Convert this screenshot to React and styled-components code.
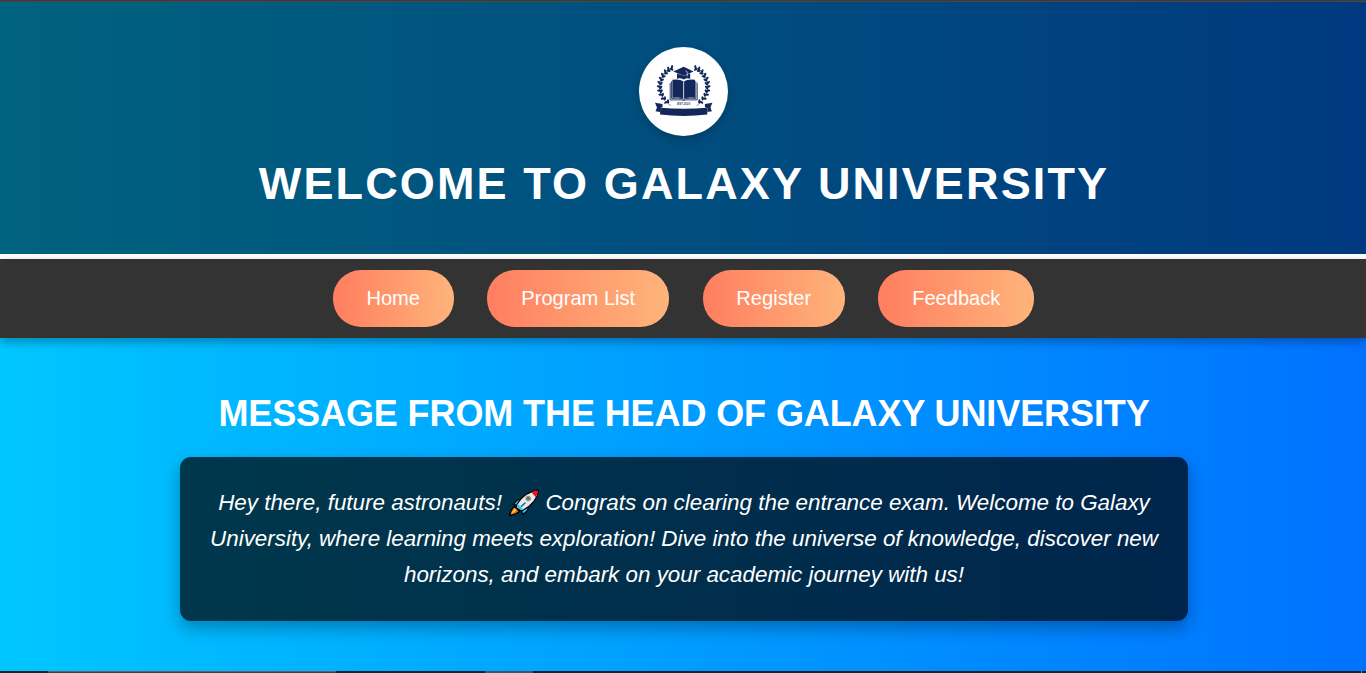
import React from "react";
import styled, { createGlobalStyle } from "styled-components";

const GlobalStyle = createGlobalStyle`
  * { box-sizing: border-box; }
  body {
    margin: 0;
    font-family: "Liberation Sans", Arial, sans-serif;
    color: #fff;
    overflow: hidden;
  }
`;

const Page = styled.div`
  height: 673px;
  display: flex;
  flex-direction: column;
  background: linear-gradient(to right, #00c6ff, #0072ff);
`;

const TopEdge = styled.div`
  flex: none;
  height: 2px;
  background: linear-gradient(#3b3b3b 50%, #474747 50%);
`;

const Header = styled.header`
  flex: none;
  height: 257px;
  padding-top: 45px;
  display: flex;
  flex-direction: column;
  align-items: center;
  background: rgba(0, 0, 0, 0.5);
  background-clip: padding-box;
  border-bottom: 5px solid #fff;
`;

const LogoDisc = styled.div`
  width: 89px;
  height: 89px;
  border-radius: 50%;
  background: #fff;
  box-shadow: 0 4px 11px rgba(0, 0, 0, 0.2);
  svg { display: block; }
`;

const Title = styled.h1`
  margin: 22px 0 0;
  font-size: 45px;
  line-height: 51px;
  letter-spacing: 2.12px;
  padding-left: 2px;
  white-space: nowrap;
`;

const Nav = styled.nav`
  flex: none;
  height: 79px;
  padding-left: 1px;
  display: flex;
  justify-content: center;
  align-items: center;
  gap: 33.5px;
  background: #333;
  box-shadow: 0 4px 9px rgba(0, 0, 0, 0.3);
`;

const NavLink = styled.a`
  width: ${(p) => p.$width}px;
  height: 57px;
  border-radius: 28px;
  line-height: 56px;
  font-size: 20.1px;
  text-align: center;
  color: #fff;
  background: linear-gradient(to right, #ff7e5f, #feb47b);
`;

const Main = styled.main`
  flex: 1;
  padding-left: 2px;
  display: flex;
  flex-direction: column;
  align-items: center;
`;

const Heading = styled.h2`
  margin: 55px 0 0;
  font-size: 36px;
  line-height: 42px;
  letter-spacing: -0.1px;
  white-space: nowrap;
`;

const Message = styled.div`
  width: 1008px;
  height: 164px;
  margin-top: 22px;
  padding-top: 28px;
  border-radius: 11px;
  background: rgba(0, 0, 0, 0.7);
  box-shadow: 0 7px 17px rgba(0, 0, 0, 0.3);
  font-size: 22.4px;
  font-style: italic;
  line-height: 36px;
  text-align: center;
`;

const Line = styled.div`
  height: 36px;
  white-space: nowrap;
`;

const RocketIcon = styled.svg`
  width: 32px;
  height: 28px;
  margin: 0 -1px 0 0;
  vertical-align: -7px;
`;

const BottomEdge = styled.div`
  flex: none;
  height: 2px;
  display: flex;
  background: #14242e;
`;

const EdgePart = styled.div`
  width: ${(p) => p.$width}px;
  background: ${(p) => p.$color};
`;

const leaves = [
  [32, 21, 25], [28.7, 22.8, 5], [25.9, 25.5, -10], [23.5, 29, -22],
  [21.7, 32.8, -32], [20.6, 36.7, -42], [20.4, 40.7, -52],
  [21, 44.7, -62], [22.5, 48.5, -75], [24.9, 52.2, -88], [28.3, 55.6, -100],
];

const Branch = () => (
  <g>
    <path d="M32.5 21C16.5 27 16.5 50 32 58.6" fill="none" stroke="#12275a" strokeWidth=".45" />
    {leaves.map(([x, y, a]) => (
      <g key={y} transform={`translate(${x} ${y}) rotate(${a})`}>
        <ellipse cx="-1" cy="-.8" rx="2.1" ry="1.1" transform="rotate(75)" />
        <ellipse cx="1" cy="1" rx="2.1" ry="1.1" />
      </g>
    ))}
  </g>
);

const Crest = () => (
  <svg width="89" height="89" viewBox="0 0 89 89" fill="#12275a">
    <Branch />
    <g transform="translate(89.4 0) scale(-1 1)"><Branch /></g>
    <path d="M44.7 19.8 54.6 24.5 44.7 28.8 34.3 24.5Z" />
    <path d="M38 26.4 44.7 28.8 51.2 26.4V31.8Q48 30.4 44.7 32.6Q41 30.4 38 31.8Z" />
    <path d="M46.5 23.8 48.2 24.8V29.5" fill="none" stroke="#fff" strokeWidth=".6" />
    <path d="M33.4 32.8Q40.5 31.8 44.3 34.2V51.7Q39.8 49.8 33.4 50.7Z" />
    <path d="M56 32.8Q49 31.8 45.1 34.2V51.7Q49.6 49.8 56 50.7Z" />
    <path d="M32.6 34.2V51.4Q40 50.6 44.7 52.2Q49.4 50.6 56.8 51.4V34.2M31.2 36V52.9H43.2L44.7 53.6L46.2 52.9H58.2V36" fill="none" stroke="#12275a" strokeWidth=".9" />
    <text x="44.7" y="58.1" textAnchor="middle" fontSize="2.6" fontWeight="bold" fontFamily="Liberation Sans" textLength="13">EST.2020</text>
    <path d="M16 55.8 23.5 57.1V60.3L21 61V65L16.5 64.2 18 60.6Z" />
    <path d="M73.4 55.8 65.9 57.1V60.3L68.4 61V65L72.9 64.2 71.4 60.6Z" />
    <path d="M21.1 60.7Q44.7 62.7 68.3 60.7V67.6Q44.7 70.2 21.1 67.6Z" />
  </svg>
);

const Rocket = () => (
  <RocketIcon viewBox="0 0 32 28" role="img" aria-label="rocket">
    <g stroke="#000" strokeWidth="1.2" strokeLinejoin="round">
      <path d="M6.5 17.5Q3 20 1.5 26.4Q8 25.5 11.5 22.5Z" fill="#f7630c" />
      <path d="M12.5 10.3Q8 10.4 5.8 15.7L10 16.2Z" fill="#31c4f3" />
      <path d="M20 17.6Q20.5 22.4 14.5 25.4L13.6 21Z" fill="#31c4f3" />
      <path d="M9 15.3C14 7 21 2.2 30.5 1.2C29.6 9.8 23 17 13.7 22L8 18.8Z" fill="#e8e8e8" />
    </g>
    <path d="M23.2 2.9Q26.5 1.7 29.9 1.8Q29.4 5.2 27.8 8.2Z" fill="#e81224" />
    <path d="M9.8 15.1 15.3 20.4 13.5 21.3 8.8 18.4Z" fill="#31c4f3" />
    <path d="M6.4 19.3 3 25Q6.5 23.5 8.8 21Z" fill="#ffc83d" />
    <circle cx="20.2" cy="9.5" r="2.5" fill="#737373" stroke="#aaa" strokeWidth=".8" />
    <path d="M13.4 17.3 17 14" stroke="#0078b8" strokeWidth="1.6" strokeLinecap="round" />
  </RocketIcon>
);

const links = [
  { label: "Home", width: 121 },
  { label: "Program List", width: 182 },
  { label: "Register", width: 142 },
  { label: "Feedback", width: 156 },
];

export default function App() {
  return (
    <Page>
      <GlobalStyle />
      <TopEdge />
      <Header>
        <LogoDisc><Crest /></LogoDisc>
        <Title>WELCOME TO GALAXY UNIVERSITY</Title>
      </Header>
      <Nav>
        {links.map(({ label, width }) => (
          <NavLink key={label} $width={width}>{label}</NavLink>
        ))}
      </Nav>
      <Main>
        <Heading>MESSAGE FROM THE HEAD OF GALAXY UNIVERSITY</Heading>
        <Message>
          <Line>Hey there, future astronauts! <Rocket /> Congrats on clearing the entrance exam. Welcome to Galaxy</Line>
          <Line>University, where learning meets exploration! Dive into the universe of knowledge, discover new</Line>
          <Line>horizons, and embark on your academic journey with us!</Line>
        </Message>
      </Main>
      <BottomEdge>
        <EdgePart $width={48} $color="#14242e" />
        <EdgePart $width={288} $color="linear-gradient(#5d6163 50%, #3a4246 50%)" />
        <EdgePart $width={149} $color="#14242e" />
        <EdgePart $width={48} $color="#3f5561" />
        <EdgePart $width={828} $color="#14242e" />
        <EdgePart $width={1} $color="#7d878c" />
      </BottomEdge>
    </Page>
  );
}
